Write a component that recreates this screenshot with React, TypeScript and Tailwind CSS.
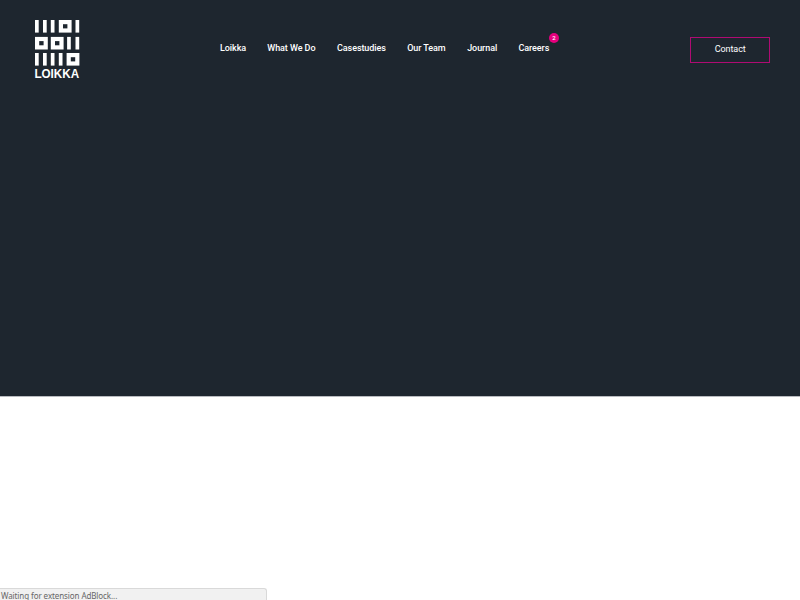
const bars = [
  [35, 20], [43, 20], [50.8, 20], [75.5, 20],
  [67.1, 36.9], [75.5, 36.9],
  [35, 53], [43, 53], [50.8, 53], [58.8, 53],
];
const squares = [[58.8, 20], [35, 36.9], [50.8, 36.9], [66.6, 53]];

function Logo() {
  return (
    <svg className="block h-[66px] w-[46px] overflow-visible" viewBox="34 19 46 66" fill="#fff" aria-label="Loikka">
      {bars.map(([x, y]) => (
        <rect key={`${x}-${y}`} x={x} y={y} width="3.7" height="12.6" />
      ))}
      {squares.map(([x, y]) => (
        <rect key={`${x}-${y}`} x={x + 2.1} y={y + 2.1} width="8.6" height="8.4" fill="none" stroke="#fff" strokeWidth="4.2" />
      ))}
      <text x="34.4" y="78.3" fontFamily="Liberation Sans, sans-serif" fontSize="12.3" fontWeight="700" textLength="44.8" lengthAdjust="spacingAndGlyphs">
        LOIKKA
      </text>
    </svg>
  );
}

const links = [
  { label: "Loikka", width: "w-[47.3px]" },
  { label: "What We Do", width: "w-[69.7px]" },
  { label: "Casestudies", width: "w-[70.2px]" },
  { label: "Our Team", width: "w-[60px]" },
  { label: "Journal", width: "w-[51.3px]" },
];

export default function App() {
  return (
    <div className="flex h-[600px] w-[800px] flex-col overflow-hidden bg-white font-['Roboto',sans-serif]">
      <header className="flex h-[397px] shrink-0 items-start border-b border-[#b9bbc0] bg-[#1e262f] pl-[34px] pt-[19px] text-white">
        <Logo />
        <nav className="ml-[140px] mt-[22px] flex h-[14px] w-[470px] whitespace-nowrap text-[9px] font-medium leading-[14px] tracking-[-0.07px]">
          {links.map((link) => (
            <a key={link.label} className={`${link.width} shrink-0`}>{link.label}</a>
          ))}
          <a className="relative">
            Careers
            <span className="absolute -top-[8px] left-[30.5px] flex h-[10px] w-[10px] items-center justify-center rounded-full bg-[#e6007e] text-[6px] leading-none">2</span>
          </a>
        </nav>
        <a className="mt-[18px] flex h-[26px] w-[80.4px] items-center justify-center border border-[#b00b73] pb-px text-[9px] leading-none tracking-[-0.05px]">Contact</a>
      </header>
      <main className="grow" />
      <footer className="flex h-[12px] w-[267px] items-end whitespace-nowrap rounded-tr-[3px] border-r border-t border-[#d9d9d9] bg-[#f1f1f1] pl-px font-['Noto_Sans',sans-serif] text-[8px] leading-[9px] tracking-[-0.09px] text-[#666]">
        Waiting for extension AdBlock...
      </footer>
    </div>
  );
}
